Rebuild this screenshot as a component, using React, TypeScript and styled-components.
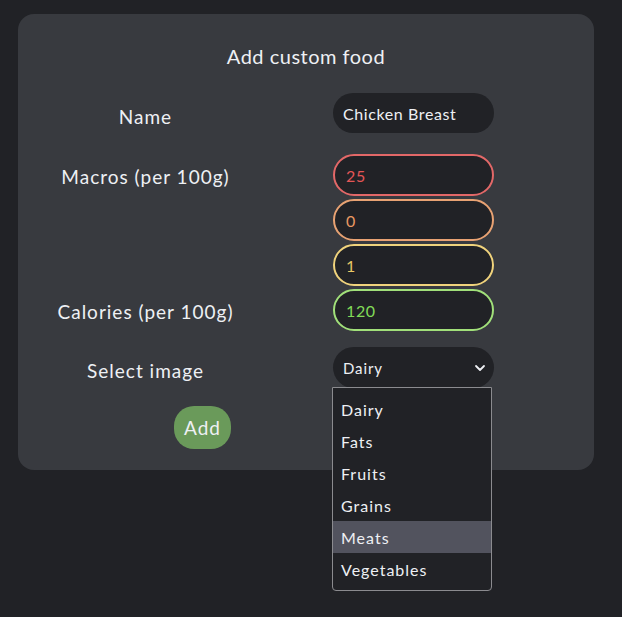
import React from "react";
import styled, { createGlobalStyle } from "styled-components";

const Global = createGlobalStyle`
  html, body { margin: 0; padding: 0; background: #212226; }
  body { font-family: "Lato", "Noto Sans", sans-serif; color: #eef0f4; }
  * { box-sizing: border-box; }
`;

const Page = styled.div`
  width: 622px;
  height: 617px;
  padding: 14px 28px 0 18px;
`;

const Card = styled.div`
  position: relative;
  width: 576px;
  background: #383a3f;
  border-radius: 16px;
  padding: 29px 0 21px 0;
`;

const Title = styled.h1`
  margin: 0 0 24px 0;
  font-size: 20px;
  font-weight: 400;
  line-height: 26px;
  letter-spacing: 0.5px;
  text-align: center;
`;

const Row = styled.div<{ $mt: number }>`
  display: grid;
  grid-template-columns: 175px 161px;
  column-gap: 100px;
  margin-left: 40px;
  margin-top: ${(p) => p.$mt}px;
  align-items: start;
`;

const Label = styled.div<{ $h: number; $shift?: number }>`
  height: ${(p) => p.$h}px;
  display: flex;
  align-items: center;
  justify-content: center;
  font-size: 19px;
  letter-spacing: 1px;
  padding-top: ${(p) => p.$shift ?? 0}px;
  white-space: nowrap;
`;

const Stack = styled.div`
  display: flex;
  flex-direction: column;
  gap: 3px;
`;

const TextField = styled.div<{ $border?: string; $color?: string; $h: number; $pad: number }>`
  height: ${(p) => p.$h}px;
  width: 161px;
  border-radius: 21px;
  background: #212226;
  border: ${(p) => (p.$border ? `2px solid ${p.$border}` : "none")};
  color: ${(p) => p.$color ?? "#eef0f4"};
  padding-left: ${(p) => p.$pad}px;
  display: flex;
  align-items: center;
  font-size: 16px;
  letter-spacing: 0.6px;
`;

const SelectBox = styled.div`
  position: relative;
  height: 41px;
  width: 161px;
  border-radius: 21px;
  background: #212226;
  display: flex;
  align-items: center;
  justify-content: space-between;
  padding: 0 8px 0 10px;
  font-size: 15px;
  letter-spacing: 0.9px;
`;

const Chevron = styled.svg`
  width: 12px;
  height: 12px;
`;

const DropList = styled.ul`
  position: absolute;
  left: -1px;
  top: 40px;
  width: 160px;
  margin: 0;
  padding: 5px 0 5px 0;
  list-style: none;
  background: #212226;
  border: 1px solid #8b8b8f;
  border-radius: 0 0 4px 4px;
  z-index: 2;
`;

const Option = styled.li<{ $active?: boolean }>`
  height: 32px;
  display: flex;
  align-items: center;
  padding-left: 8px;
  font-size: 16px;
  letter-spacing: 1px;
  background: ${(p) => (p.$active ? "#52535e" : "transparent")};
`;

const AddButton = styled.button`
  margin: 18px 0 0 156px;
  width: 57px;
  height: 43px;
  border: none;
  border-radius: 20px;
  background: #6a9a5a;
  color: #eef0f4;
  font-family: inherit;
  font-size: 19px;
  letter-spacing: 1px;
  padding: 0;
  display: block;
`;

const options = ["Dairy", "Fats", "Fruits", "Grains", "Meats", "Vegetables"];

export default function App() {
  return (
    <>
      <Global />
      <Page>
        <Card>
          <Title>Add custom food</Title>
          <Row $mt={0}>
            <Label $h={40} $shift={6}>Name</Label>
            <TextField $h={40} $pad={10}>Chicken Breast</TextField>
          </Row>
          <Row $mt={21}>
            <Label $h={42} $shift={2}>Macros (per 100g)</Label>
            <Stack>
              <TextField $h={42} $pad={11} $border="#e36868" $color="#e35656">25</TextField>
              <TextField $h={42} $pad={11} $border="#e8a273" $color="#e99862">0</TextField>
              <TextField $h={42} $pad={11} $border="#f0d37c" $color="#e9c866">1</TextField>
            </Stack>
          </Row>
          <Row $mt={3}>
            <Label $h={42} $shift={2}>Calories (per 100g)</Label>
            <TextField $h={42} $pad={11} $border="#a1e07a" $color="#82dc58">120</TextField>
          </Row>
          <Row $mt={16}>
            <Label $h={41} $shift={5}>Select image</Label>
            <SelectBox>
              <span>Dairy</span>
              <Chevron viewBox="0 0 12 12">
                <polyline points="2,4 6,8 10,4" fill="none" stroke="#eef0f4" strokeWidth="1.8" strokeLinecap="round" strokeLinejoin="round" />
              </Chevron>
              <DropList>
                {options.map((o) => (
                  <Option key={o} $active={o === "Meats"}>{o}</Option>
                ))}
              </DropList>
            </SelectBox>
          </Row>
          <AddButton>Add</AddButton>
        </Card>
      </Page>
    </>
  );
}
